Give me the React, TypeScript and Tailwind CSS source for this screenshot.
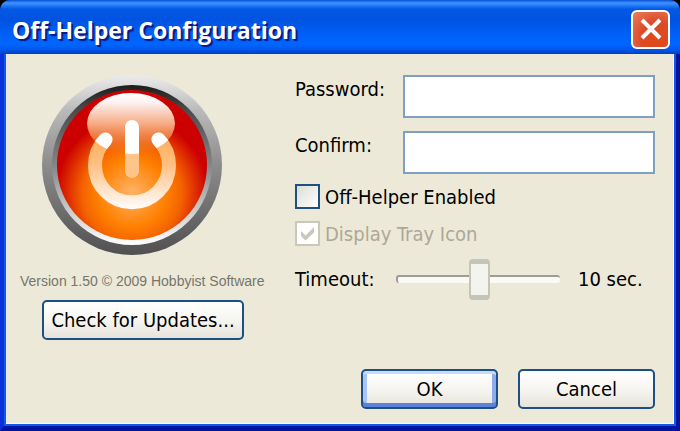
import React, { useState } from "react";

const buttonBase =
  "h-10 rounded-[5px] border-2 border-[#1c4f85] bg-gradient-to-b from-white via-[#f6f5f0] to-[#e6e3da] text-black";

function PowerLogo() {
  return (
    <svg viewBox="0 0 180 180" className="ml-[22px] block h-[180px] w-[180px]" role="img" aria-label="Off-Helper">
      <defs>
        <linearGradient id="rim" x1="0" y1="0" x2="0" y2="1">
          <stop offset="0" stopColor="#ececec" />
          <stop offset="0.2" stopColor="#b9b9b9" />
          <stop offset="0.5" stopColor="#8c8c8c" />
          <stop offset="1" stopColor="#505050" />
        </linearGradient>
        <linearGradient id="bevel" x1="0" y1="0" x2="0" y2="1">
          <stop offset="0" stopColor="#1c1c1c" />
          <stop offset="0.15" stopColor="#4a4a4a" />
          <stop offset="0.5" stopColor="#858585" />
          <stop offset="0.8" stopColor="#cfcfcf" />
          <stop offset="1" stopColor="#ffffff" />
        </linearGradient>
        <radialGradient id="glow" gradientUnits="userSpaceOnUse" cx="90" cy="118" r="76">
          <stop offset="0" stopColor="#ffb469" />
          <stop offset="0.45" stopColor="#ff8000" />
          <stop offset="0.65" stopColor="#f56400" />
          <stop offset="1" stopColor="#cc0000" />
        </radialGradient>
        <linearGradient id="gloss" x1="0" y1="0" x2="0" y2="1">
          <stop offset="0" stopColor="#fff" />
          <stop offset="0.15" stopColor="#fff" stopOpacity="0.95" />
          <stop offset="0.5" stopColor="#f8b58c" stopOpacity="0.95" />
          <stop offset="0.8" stopColor="#f07a30" stopOpacity="0.8" />
          <stop offset="1" stopColor="#f26a10" stopOpacity="0.3" />
        </linearGradient>
        <linearGradient id="ring" gradientUnits="userSpaceOnUse" x1="0" y1="64" x2="0" y2="135">
          <stop offset="0" stopColor="#ffb060" />
          <stop offset="0.35" stopColor="#ffbe80" />
          <stop offset="1" stopColor="#fff" />
        </linearGradient>
        <clipPath id="glossArea">
          <ellipse cx="89" cy="48.5" rx="44" ry="30.5" />
        </clipPath>
      </defs>
      <circle cx="90" cy="90" r="90" fill="url(#rim)" />
      <circle cx="90" cy="90" r="80" fill="url(#bevel)" />
      <circle cx="90" cy="90" r="75" fill="url(#glow)" />
      <ellipse cx="89" cy="48.5" rx="44" ry="30.5" fill="url(#gloss)" />
      <path d="M63.5 64.5A37 37 0 1 0 116.5 64.5" fill="none" stroke="url(#ring)" strokeWidth="14" strokeLinecap="round" />
      <rect x="83" y="45" width="14" height="58" rx="7" fill="#ffc48a" />
      <g clipPath="url(#glossArea)">
        <path d="M63.5 64.5A37 37 0 1 0 116.5 64.5" fill="none" stroke="#fff" strokeWidth="14" strokeLinecap="round" />
        <rect x="83" y="45" width="14" height="58" rx="7" fill="#fff" />
      </g>
    </svg>
  );
}

export default function App() {
  const [timeout, setTimeoutValue] = useState(10);
  const [enabled, setEnabled] = useState(false);

  return (
    <div className="min-h-screen bg-black">
      <main className="flex min-h-screen flex-col rounded-t-[10px] bg-[#0a35d8] font-['DejaVu_Sans_Condensed','Noto_Sans',sans-serif] text-[20px] leading-6 text-black">
        <header className="flex h-[54px] shrink-0 items-center justify-between rounded-t-[10px] bg-[linear-gradient(to_bottom,#0a50d8_0px,#3d95ff_3px,#2a80fa_5px,#0458e4_9px,#0053e1_20px,#0060f8_34px,#0066ff_44px,#005af0_49px,#003fc4_54px)] pt-1 pr-2.5 pl-3">
          <h1 className="pt-0.5 font-['Open_Sans','Noto_Sans',sans-serif] text-[23px] leading-8 font-bold whitespace-nowrap text-white [text-shadow:2px_2px_1px_#0a1883]">
            Off-Helper Configuration
          </h1>
          <button
            type="button"
            aria-label="Close"
            className="flex h-[39px] w-[39px] items-center justify-center rounded-[6px] border-2 border-white bg-[radial-gradient(circle_at_70%_75%,#e04a18,#dc4a26_45%,#e88064)]"
          >
            <svg viewBox="0 0 24 24" className="h-6 w-6" fill="none" stroke="#fff" strokeWidth="4" aria-hidden="true">
              <path d="M3 3L21 21M21 3L3 21" />
            </svg>
          </button>
        </header>

        <div className="flex grow border-x-4 border-b-[5px] border-r-[#0014a0] border-b-[#0014a0] border-l-[#0831d9]">
          <div className="flex grow border-x-2 border-b-2 border-[#1458ee]">
            <form
              className="flex grow flex-col justify-between border-r border-b border-[#fff8e0] bg-[#ece9d8] pt-[21px] pr-[18px] pb-3.5 pl-3.5"
              onSubmit={(e) => e.preventDefault()}
            >
              <div className="flex">
                <section className="flex w-[275px] shrink-0 flex-col items-start">
                  <PowerLogo />
                  <p className="mt-[18px] font-['Liberation_Sans',Arial,sans-serif] text-[14px] leading-4 whitespace-nowrap text-[#77756c]">
                    Version 1.50 © 2009 Hobbyist Software
                  </p>
                  <button type="button" className={`${buttonBase} mt-[11px] ml-[22px] w-[202px] whitespace-nowrap`}>
                    Check for Updates...
                  </button>
                </section>

                <section className="flex grow flex-col">
                  <div className="flex">
                    <label htmlFor="password" className="w-[108px] shrink-0 pt-0.5">Password:</label>
                    <input id="password" type="password" className="h-[43px] w-0 grow border-2 border-[#7f9fc3] bg-white px-2 outline-none" />
                  </div>
                  <div className="mt-[13px] flex">
                    <label htmlFor="confirm" className="w-[108px] shrink-0 pt-0.5">Confirm:</label>
                    <input id="confirm" type="password" className="h-[43px] w-0 grow border-2 border-[#7f9fc3] bg-white px-2 outline-none" />
                  </div>
                  <label className="mt-2.5 flex items-center gap-[5px]">
                    <input
                      type="checkbox"
                      checked={enabled}
                      onChange={(e) => setEnabled(e.target.checked)}
                      className="h-[25px] w-[25px] appearance-none border-2 border-[#1c5180] bg-gradient-to-br from-[#dcdcd7] to-white checked:bg-[#21a121]"
                    />
                    Off-Helper Enabled
                  </label>
                  <label className="mt-3 flex items-center gap-[5px] text-[#aca899]">
                    <span className="grid">
                      <input
                        type="checkbox"
                        checked
                        disabled
                        readOnly
                        className="col-start-1 row-start-1 h-[25px] w-[25px] appearance-none border-2 border-[#cac8bb] bg-white"
                      />
                      <svg viewBox="0 0 25 25" className="col-start-1 row-start-1 h-[25px] w-[25px]" aria-hidden="true">
                        <path d="M6 10L10.500 14.500L19 6V11.500L10.500 19.500L6 15Z" fill="#cac8bb" />
                      </svg>
                    </span>
                    Display Tray Icon
                  </label>
                  <div className="mt-3 flex items-center">
                    <label htmlFor="timeout" className="w-[101px] shrink-0">Timeout:</label>
                    <input
                      id="timeout"
                      type="range"
                      min="0"
                      max="20"
                      value={timeout}
                      onChange={(e) => setTimeoutValue(Number(e.target.value))}
                      className="h-[41px] w-[164px] appearance-none bg-transparent [&::-webkit-slider-runnable-track]:h-[8px] [&::-webkit-slider-runnable-track]:rounded-[3px] [&::-webkit-slider-runnable-track]:border-t-2 [&::-webkit-slider-runnable-track]:border-l-2 [&::-webkit-slider-runnable-track]:border-[#9d9c99] [&::-webkit-slider-runnable-track]:bg-[#faf9f4] [&::-webkit-slider-thumb]:mt-[-18px] [&::-webkit-slider-thumb]:h-[41px] [&::-webkit-slider-thumb]:w-[21px] [&::-webkit-slider-thumb]:appearance-none [&::-webkit-slider-thumb]:rounded-[4px] [&::-webkit-slider-thumb]:border-x-2 [&::-webkit-slider-thumb]:border-y-[5px] [&::-webkit-slider-thumb]:border-[#c5c4b8] [&::-webkit-slider-thumb]:bg-[#f4f4ee]"
                    />
                    <output htmlFor="timeout" className="pl-[18px] whitespace-nowrap">{timeout} sec.</output>
                  </div>
                </section>
              </div>

              <footer className="flex justify-end gap-5">
                <button type="submit" className={`${buttonBase} w-[137px] shadow-[inset_0_3px_0_#c6dcfc,inset_0_-4px_0_#5c80dc,inset_4px_0_0_#a9c4f4,inset_-4px_0_0_#8eacec]`}>
                  OK
                </button>
                <button type="button" className={`${buttonBase} w-[137px]`}>
                  Cancel
                </button>
              </footer>
            </form>
          </div>
        </div>
      </main>
    </div>
  );
}
